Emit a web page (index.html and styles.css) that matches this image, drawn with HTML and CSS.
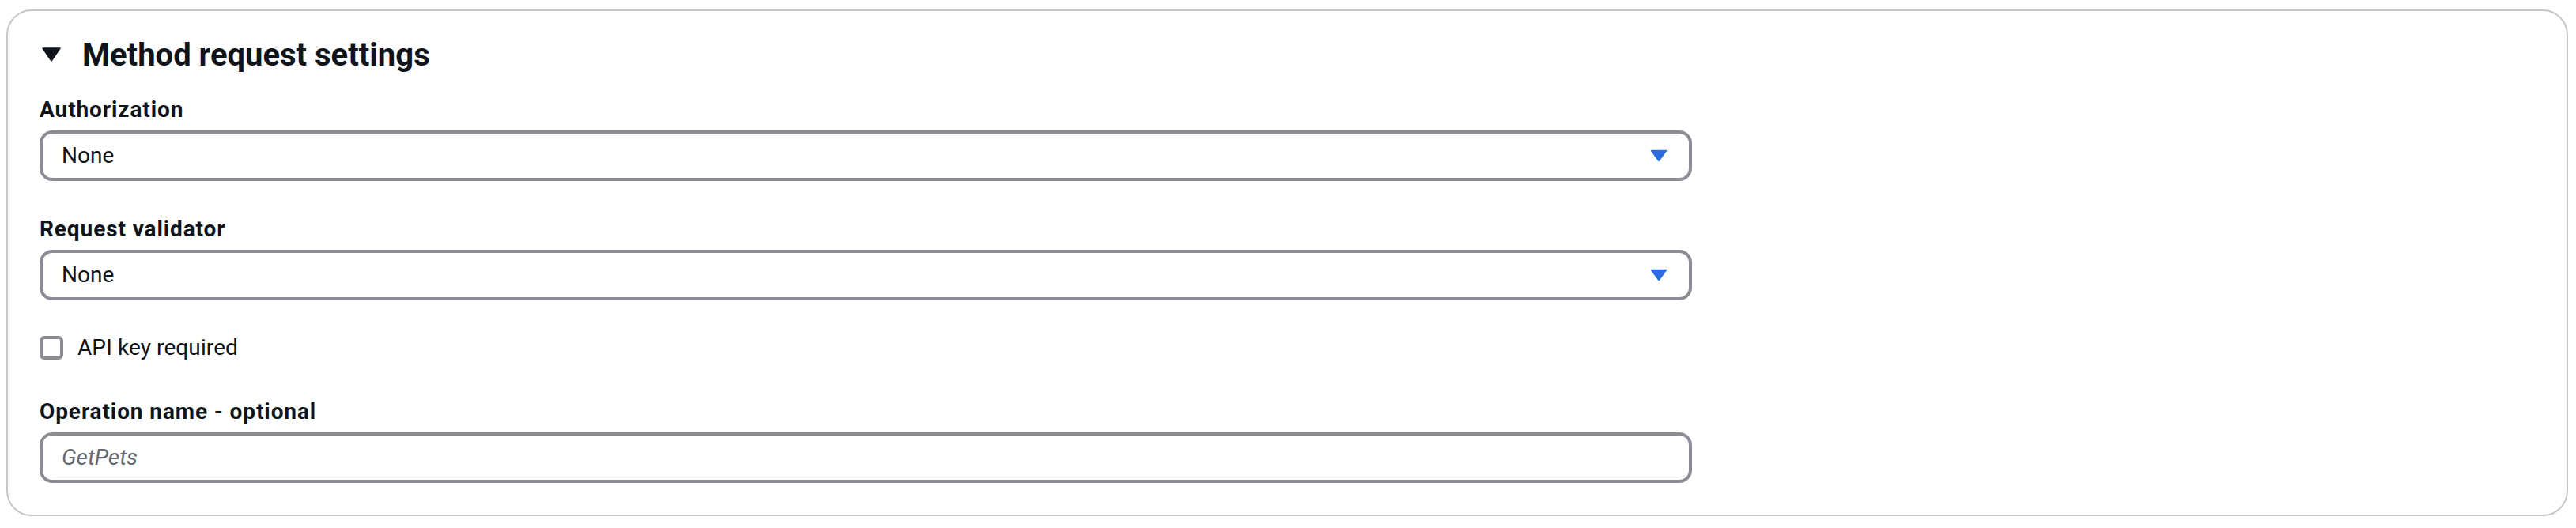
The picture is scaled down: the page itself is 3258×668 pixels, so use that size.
FILE: index.html
```html
<!DOCTYPE html>
<html lang="en">
<head>
<meta charset="utf-8">
<title>Method request settings</title>
<link rel="stylesheet" href="styles.css">
</head>
<body>
<section class="panel">
  <div class="panel-header">
    <svg class="expand-icon" width="24" height="18" viewBox="0 0 24 18" aria-hidden="true"><path d="M1 1 H23 L12 17 Z" fill="#0f141a" stroke="#0f141a" stroke-width="1.5" stroke-linejoin="round"/></svg>
    <h2 class="panel-title">Method request settings</h2>
  </div>
  <div class="panel-body">
    <div class="field field-first">
      <div class="field-label">Authorization</div>
      <div class="control select">
        <span class="value">None</span>
        <svg class="select-caret" width="22" height="16" viewBox="0 0 22 16" aria-hidden="true"><path d="M1.5 1.5 H20.5 L11 14.5 Z" fill="#2c6be0" stroke="#2c6be0" stroke-width="1.5" stroke-linejoin="round"/></svg>
      </div>
    </div>
    <div class="field field-second">
      <div class="field-label">Request validator</div>
      <div class="control select">
        <span class="value">None</span>
        <svg class="select-caret" width="22" height="16" viewBox="0 0 22 16" aria-hidden="true"><path d="M1.5 1.5 H20.5 L11 14.5 Z" fill="#2c6be0" stroke="#2c6be0" stroke-width="1.5" stroke-linejoin="round"/></svg>
      </div>
    </div>
    <div class="checkbox-row">
      <span class="checkbox"></span>
      <span class="checkbox-label">API key required</span>
    </div>
    <div class="field field-last">
      <div class="field-label">Operation name - optional</div>
      <div class="control input">
        <span class="placeholder">GetPets</span>
      </div>
    </div>
  </div>
</section>
</body>
</html>
```

FILE: styles.css
```css
* {
  box-sizing: border-box;
}

html, body {
  margin: 0;
  padding: 0;
  background: #ffffff;
}

body {
  font-family: Roboto, "Noto Sans", "Liberation Sans", sans-serif;
  color: #0f141a;
  font-size: 28px;
  line-height: 36px;
}

.panel {
  margin: 12px 10px 0 8px;
  border: 2px solid #c6c6cd;
  border-radius: 32px;
  padding: 32px 40px 40px 40px;
}

.panel-header {
  display: flex;
  align-items: center;
  height: 48px;
}

.expand-icon {
  margin-left: 3px;
  margin-right: 27px;
  margin-top: -3px;
  flex: none;
}

.panel-title {
  margin: 0;
  font-size: 40px;
  line-height: 48px;
  font-weight: 700;
  letter-spacing: 0;
}

.panel-body {
  display: flex;
  flex-direction: column;
}

.field {
  display: flex;
  flex-direction: column;
  width: 2090px;
}

.field-first {
  margin-top: 27px;
}

.field-second {
  margin-top: 43px;
}

.field-last {
  margin-top: 45px;
}

.field-label {
  font-weight: 700;
  font-size: 28px;
  line-height: 36px;
  letter-spacing: 0.9px;
  margin-bottom: 8px;
}

.control {
  height: 64px;
  border: 4px solid #8c8c94;
  border-radius: 16px;
  padding: 0 27px 0 24px;
  display: flex;
  align-items: center;
  justify-content: space-between;
  background: #ffffff;
}

.value {
  font-size: 28px;
}

.placeholder {
  font-style: italic;
  color: #656871;
  font-size: 28px;
}

.select-caret {
  flex: none;
}

.checkbox-row {
  margin-top: 42px;
  display: flex;
  align-items: center;
  height: 36px;
}

.checkbox {
  width: 30px;
  height: 30px;
  border: 4px solid #8c8c94;
  border-radius: 6px;
  flex: none;
  margin-right: 18px;
}

.checkbox-label {
  font-size: 28px;
  line-height: 36px;
  letter-spacing: 0.1px;
}
```
